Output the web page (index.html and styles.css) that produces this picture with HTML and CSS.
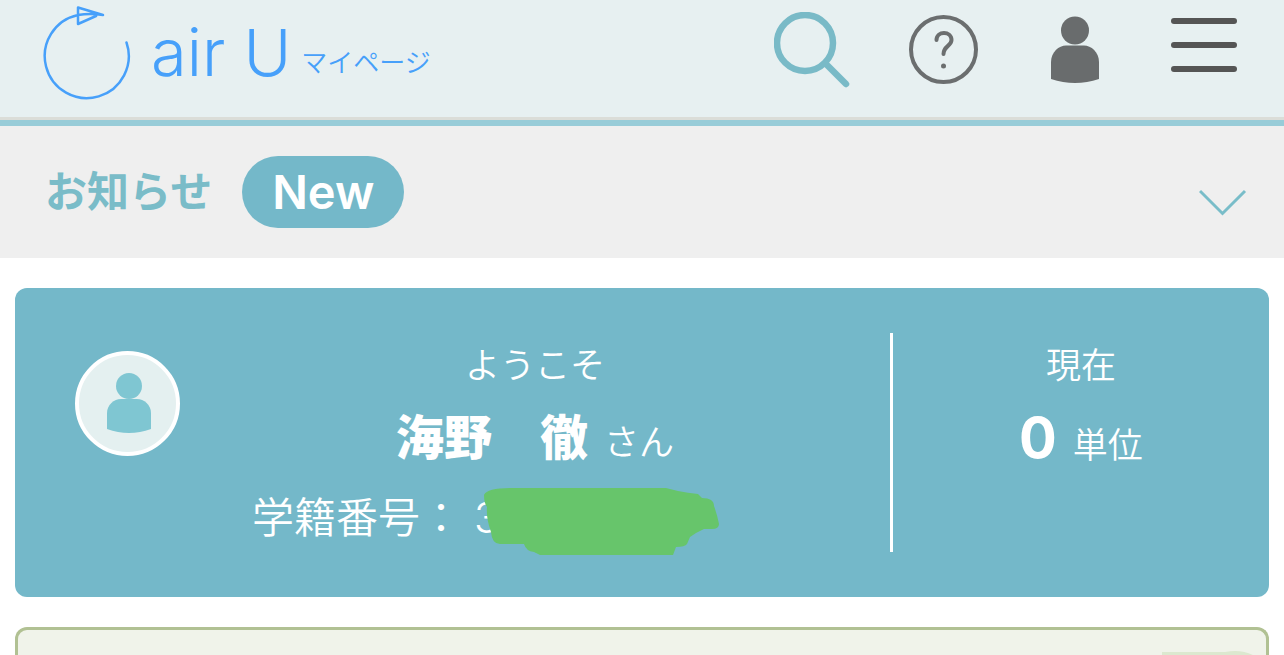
FILE: index.html
```html
<!DOCTYPE html>
<html lang="ja">
<head>
  <meta charset="UTF-8" />
  <meta name="viewport" content="width=device-width, initial-scale=1.0" />
  <title>air U マイページ</title>
  <link rel="stylesheet" href="styles.css">
</head>
<body>
  <header class="header">
    <a class="logo" href="#">
      <svg class="logo-mark" width="90" height="100" viewBox="0 0 90 100" fill="none" stroke="#47a0fa" stroke-width="2.5" stroke-linecap="round" stroke-linejoin="round" aria-hidden="true">
        <path d="M83.500 42.500A42 42 0 1 1 35 15Q47 13 60 15L35 7.500V24L53 16" />
      </svg>
      <span class="logo-name">air U</span>
      <span class="logo-sub">マイページ</span>
    </a>

    <nav class="nav">
      <button class="nav-btn" type="button" aria-label="検索">
        <svg width="76" height="76" viewBox="0 0 76 76" fill="none" stroke="#79bac7" stroke-width="6.500">
          <circle cx="31" cy="31" r="28" />
          <path d="M52 52L72 72" stroke-linecap="round" />
        </svg>
      </button>
      <button class="nav-btn" type="button" aria-label="ヘルプ">
        <svg width="70" height="70" viewBox="0 0 70 70" fill="none" stroke="#6b6e6f" stroke-width="4">
          <circle cx="34.500" cy="34.500" r="32.500" />
          <path d="M27.500 25C27.500 15.500 42.500 15.500 42.500 25C42.500 31 34.500 31 34.500 39" stroke-linecap="round" />
          <circle cx="34.500" cy="51" r="2.500" fill="#6b6e6f" stroke="none" />
        </svg>
      </button>
      <button class="nav-btn" type="button" aria-label="アカウント">
        <svg width="48" height="68" viewBox="0 0 48 68" fill="#696c6d">
          <circle cx="24" cy="14.500" r="14" />
          <path d="M0 46C0 36 8 29.500 15 29.500H33C40 29.500 48 36 48 46V63Q24 71 0 63Z" />
        </svg>
      </button>
      <button class="nav-btn" type="button" aria-label="メニュー">
        <svg width="66" height="64" viewBox="0 0 66 64" fill="#555">
          <rect width="66" height="6" rx="3" />
          <rect y="24" width="66" height="6" rx="3" />
          <rect y="48" width="66" height="6" rx="3" />
        </svg>
      </button>
    </nav>
  </header>

  <button class="news" type="button" aria-expanded="false">
    <span class="news-title">お知らせ</span>
    <span class="news-badge">New</span>
    <svg class="news-arrow" width="48" height="28" viewBox="0 0 48 28" fill="none" stroke="#79bdc9" stroke-width="3" aria-hidden="true">
      <path d="M1 2L23.500 24.500L46 2" />
    </svg>
  </button>

  <main class="main">
    <section class="profile">
      <svg class="avatar" width="105" height="105" viewBox="0 0 105 105" aria-hidden="true">
        <circle cx="52.500" cy="52.500" r="50.500" fill="#e4f0f0" stroke="#fff" stroke-width="4" />
        <circle cx="54" cy="35" r="13" fill="#7fc6d2" />
        <path d="M32 62C32 54 39 48 46 48H62C69 48 76 54 76 62V78Q54 86 32 78Z" fill="#7fc6d2" />
      </svg>

      <div class="student">
        <p class="greeting">ようこそ</p>
        <p class="name"><strong>海野　徹</strong><span>さん</span></p>
        <p class="student-no">
          <span>学籍番号：</span>
          <span class="number">3
            <svg class="mask" width="238" height="70" viewBox="0 0 238 70" fill="#67c56b" aria-hidden="true">
              <path d="M2 8Q5 1 28 1H184L196 4Q206 6 216 7L220 11Q232 11 232 19Q235 27 237 37Q237 42 230 42H222L214 46L208 50L205 57Q203 60 194 60L191 68H58L52 65Q44 64 42 57H18Q10 57 9 45Q4 31 5 20Q2 16 2 8Z" />
            </svg>
          </span>
        </p>
      </div>

      <div class="credits">
        <p class="greeting">現在</p>
        <p class="name"><strong class="count">0</strong><span>単位</span></p>
      </div>
    </section>

    <section class="panel">
      <svg class="panel-art" width="100" height="32" viewBox="0 0 100 32" fill="none" stroke="#dce8cf" stroke-width="4" aria-hidden="true">
        <path d="M0 24H66" />
        <path d="M48 29Q75 17 94 29" />
      </svg>
    </section>
  </main>
</body>
</html>
```
FILE: styles.css
```css
* {
  box-sizing: border-box;
}

body {
  margin: 0;
  min-height: 100vh;
  display: flex;
  flex-direction: column;
  background: #fff;
  font-family: Inter, 'Noto Sans CJK JP', sans-serif;
}

p {
  margin: 0;
}

button {
  border: none;
  padding: 0;
  background: none;
  font: inherit;
  cursor: pointer;
}

svg {
  display: block;
  flex: none;
}

/* header */
.header {
  display: flex;
  justify-content: space-between;
  align-items: flex-start;
  height: 120px;
  padding: 0 47px 0 43px;
  background: #e7f0f1;
  border-bottom: 3px solid #dbddd8;
}

.logo {
  display: flex;
  align-items: flex-start;
  color: #47a0fa;
  text-decoration: none;
}

.logo-name {
  margin-left: 18px;
  font-size: 65px;
  font-weight: 300;
  line-height: 106px;
}

.logo-sub {
  margin-left: 10px;
  font-size: 26px;
  font-weight: 350;
  line-height: 126px;
}

.nav {
  display: flex;
  align-items: center;
  height: 92px;
  padding-top: 8px;
}

.nav-btn {
  margin-left: 72px;
}

.nav-btn:nth-child(2) {
  margin-left: 59px;
}

/* news */
.news {
  display: flex;
  align-items: center;
  height: 138px;
  padding: 0 37px 0 45px;
  background: #efefef;
  border-top: 6px solid #98ccd8;
  font-weight: 700;
}

.news-title {
  padding-bottom: 8px;
  color: #7abcc8;
  font-size: 42px;
}

.news-badge {
  margin-left: 30px;
  padding: 0 30px;
  border-radius: 36px;
  background: #74b8c9;
  color: #fff;
  font-size: 47px;
  font-weight: 600;
  line-height: 72px;
}

.news-arrow {
  margin: 22px 0 0 auto;
}

/* profile */
.main {
  flex: 1;
  display: flex;
  flex-direction: column;
  gap: 30px;
  padding: 30px 15px 0;
}

.profile {
  display: flex;
  padding: 45px 0;
  border-radius: 12px;
  background: #74b8c9;
  color: #fff;
  font-weight: 350;
  text-align: center;
}

.avatar {
  margin: 18px 0 0 60px;
}

.student {
  flex: 1;
  border-right: 3px solid #fff;
}

.credits {
  width: 30%;
}

.greeting {
  font-size: 35px;
  line-height: 64px;
}

.name {
  display: flex;
  justify-content: center;
  align-items: baseline;
  gap: 16px;
  font-size: 35px;
  line-height: 82px;
}

.name strong {
  font-size: 48px;
  font-weight: 900;
}

.name .count {
  font-size: 56px;
  font-weight: 700;
}

.student-no {
  display: flex;
  justify-content: center;
  gap: 12px;
  font-size: 42px;
  line-height: 69px;
}

.number {
  position: relative;
  width: 344px;
  text-align: left;
}

.mask {
  position: absolute;
  left: 8px;
  top: 4px;
}

/* next panel */
.panel {
  flex: 1;
  border: 3px solid #b1c193;
  border-bottom: none;
  border-radius: 12px 12px 0 0;
  background: #f0f3ea;
  overflow: hidden;
}

.panel-art {
  margin: 0 4px -7px auto;
}
```
